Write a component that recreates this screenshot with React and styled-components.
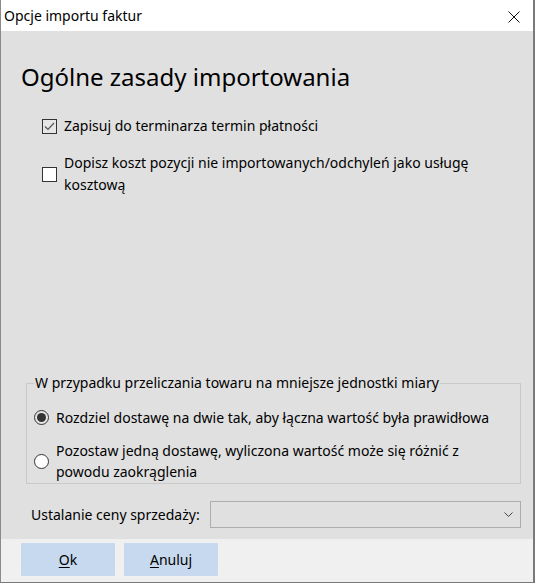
import React from "react";
import styled, { createGlobalStyle } from "styled-components";

const Global = createGlobalStyle`
  html, body {
    margin: 0;
    padding: 0;
    background: #ffffff;
  }
  * {
    box-sizing: border-box;
  }
`;

const Window = styled.div`
  width: 535px;
  height: 583px;
  display: flex;
  flex-direction: column;
  border-left: 1px solid #8a8a8a;
  border-right: 2px solid #7a7a7a;
  border-bottom: 1px solid #7a7a7a;
  font-family: "Segoe UI", "Noto Sans", sans-serif;
  color: #000;
`;

const TitleBar = styled.div`
  height: 31px;
  flex: none;
  background: #ffffff;
  display: flex;
  align-items: center;
  justify-content: space-between;
  padding-left: 3px;
  padding-right: 13px;
  font-size: 14px;
`;

const CloseButton = styled.span`
  display: flex;
  width: 12px;
  height: 12px;
  margin-top: 2px;
`;

const Content = styled.div`
  flex: 1;
  background: #e0e0e0;
  display: flex;
  flex-direction: column;
  padding: 29px 12px 11px 20px;
`;

const Heading = styled.h1`
  margin: 0 0 21px 0;
  font-size: 24px;
  font-weight: 400;
  line-height: 34px;
`;

const OptionRow = styled.label`
  display: flex;
  align-items: center;
  gap: 7px;
  margin-left: 21px;
  margin-bottom: ${(p) => p.spacing || 0}px;
  font-size: 14px;
  line-height: 22px;
`;

const Box = styled.span`
  flex: none;
  width: 15px;
  height: 15px;
  border: 1px solid #333;
  background: ${(p) => (p.checked ? "#e6e6e6" : "#ffffff")};
  display: flex;
  align-items: center;
  justify-content: center;
`;

const Group = styled.fieldset`
  margin: auto 0 0 5px;
  padding: 2px 7px 1px 7px;
  border: 1px solid #c9c9c9;
  min-width: 0;
`;

const Legend = styled.legend`
  padding: 0 1px;
  font-size: 14px;
  line-height: 20px;
`;

const RadioRow = styled.label`
  display: flex;
  align-items: center;
  gap: 7px;
  margin-top: ${(p) => p.spacing || 0}px;
  font-size: 14px;
  line-height: 21px;
`;

const Radio = styled.span`
  flex: none;
  width: 15px;
  height: 15px;
  border-radius: 50%;
  border: 1px solid #333;
  background: ${(p) => (p.checked ? "#e6e6e6" : "#ffffff")};
  display: flex;
  align-items: center;
  justify-content: center;
  &::after {
    content: "";
    display: ${(p) => (p.checked ? "block" : "none")};
    width: 9px;
    height: 9px;
    border-radius: 50%;
    background: #333;
  }
`;

const PriceRow = styled.div`
  display: flex;
  align-items: center;
  gap: 10px;
  margin-top: 17px;
  padding-left: 10px;
  font-size: 14px;
`;

const Select = styled.div`
  flex: 1;
  height: 27px;
  border: 1px solid #adadad;
  background: #e0e0e0;
  display: flex;
  align-items: center;
  justify-content: flex-end;
  padding-right: 7px;
`;

const Footer = styled.div`
  height: 43px;
  flex: none;
  background: #f0f0f0;
  display: flex;
  align-items: flex-start;
  gap: 9px;
  padding: 4px 0 0 20px;
`;

const Button = styled.button`
  width: 94px;
  height: 33px;
  border: none;
  border-radius: 1px;
  background: #c6d9ee;
  font-family: inherit;
  font-size: 14px;
  color: #000;
  padding: 0;
  u {
    text-decoration-thickness: 1px;
    text-underline-offset: 2px;
  }
`;

export default function App() {
  return (
    <>
      <Global />
      <Window>
        <TitleBar>
          <span>Opcje importu faktur</span>
          <CloseButton>
            <svg width="12" height="12" viewBox="0 0 12 12">
              <path d="M0.5 0.5 L11.5 11.5 M11.5 0.5 L0.5 11.5" stroke="#111" strokeWidth="1" fill="none" />
            </svg>
          </CloseButton>
        </TitleBar>
        <Content>
          <Heading>Ogólne zasady importowania</Heading>
          <OptionRow spacing={15}>
            <Box checked>
              <svg width="11" height="9" viewBox="0 0 11 9">
                <path d="M1 4.5 L4 7.5 L10 1" stroke="#555" strokeWidth="1.2" fill="none" />
              </svg>
            </Box>
            Zapisuj do terminarza termin płatności
          </OptionRow>
          <OptionRow>
            <Box />
            <span>
              Dopisz koszt pozycji nie importowanych/odchyleń jako usługę
              <br />
              kosztową
            </span>
          </OptionRow>

          <Group>
            <Legend>W przypadku przeliczania towaru na mniejsze jednostki miary</Legend>
            <RadioRow spacing={12}>
              <Radio checked />
              Rozdziel dostawę na dwie tak, aby łączna wartość była prawidłowa
            </RadioRow>
            <RadioRow spacing={12}>
              <Radio />
              <span>
                Pozostaw jedną dostawę, wyliczona wartość może się różnić z
                <br />
                powodu zaokrąglenia
              </span>
            </RadioRow>
          </Group>

          <PriceRow>
            <span>Ustalanie ceny sprzedaży:</span>
            <Select>
              <svg width="9" height="5" viewBox="0 0 9 5">
                <path d="M0.5 0.5 L4.5 4.5 L8.5 0.5" stroke="#444" strokeWidth="1" fill="none" />
              </svg>
            </Select>
          </PriceRow>
        </Content>
        <Footer>
          <Button>
            <u>O</u>k
          </Button>
          <Button>
            <u>A</u>nuluj
          </Button>
        </Footer>
      </Window>
    </>
  );
}
